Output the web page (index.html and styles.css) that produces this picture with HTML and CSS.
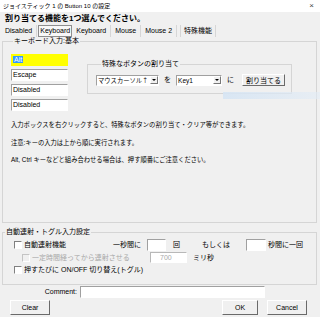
FILE: index.html
```html
<!DOCTYPE html>
<html lang="ja">
<head>
    <meta charset="UTF-8">
    <meta name="viewport" content="width=device-width, initial-scale=1.0">
    <title>ジョイスティック 1 の Button 10 の設定</title>
    <link rel="stylesheet" href="styles.css">
</head>
<body>
    <div class="titlebar">
        <span>ジョイスティック 1 の Button 10 の設定</span>
        <span class="close">×</span>
    </div>
    <div class="heading">割り当てる機能を1つ選んでください。</div>

    <div class="tabs">
        <span class="tab">Disabled</span>
        <span class="tab active">Keyboard</span>
        <span class="tab">Keyboard</span>
        <span class="tab">Mouse</span>
        <span class="tab">Mouse 2</span>
        <span class="tab boxed">特殊機能</span>
    </div>

    <fieldset class="group keyboard">
        <legend>キーボード入力:基本</legend>
        <div class="key-row">
            <div class="keys">
                <div class="keybox current"><span class="sel">Alt</span></div>
                <div class="keybox">Escape</div>
                <div class="keybox">Disabled</div>
                <div class="keybox">Disabled</div>
            </div>
            <fieldset class="group special">
                <legend>特殊なボタンの割り当て</legend>
                <div class="special-row">
                    <div class="select wide"><span class="value cjk">マウスカーソル↑</span><span class="arrow"></span></div>
                    <span class="word">を</span>
                    <div class="select"><span class="value">Key1</span><span class="arrow"></span></div>
                    <span class="word">に</span>
                    <button class="btn assign" type="button">割り当てる</button>
                </div>
            </fieldset>
        </div>
        <p class="note first">入力ボックスを右クリックすると、特殊なボタンの割り当て・クリア等ができます。</p>
        <p class="note second">注意:キーの入力は上から順に実行されます。</p>
        <p class="note third">Alt, Ctrl キーなどと組み合わせる場合は、押す順番にご注意ください。</p>
    </fieldset>

    <fieldset class="group auto">
        <legend>自動連射・トグル入力設定</legend>
        <div class="auto-row row1">
            <span class="check"></span>
            <span class="label">自動連射機能</span>
            <span class="per">一秒間に</span>
            <span class="field count"></span>
            <span class="unit">回</span>
            <span class="or">もしくは</span>
            <span class="field secs"></span>
            <span class="unit2">秒間に一回</span>
        </div>
        <div class="auto-row row2">
            <span class="check disabled"></span>
            <span class="label muted">一定時間経ってから連射させる</span>
            <span class="field delay">700</span>
            <span class="ms">ミリ秒</span>
        </div>
        <div class="auto-row row3">
            <span class="check"></span>
            <span class="label">押すたびに ON/OFF 切り替え(トグル)</span>
        </div>
    </fieldset>

    <div class="comment-row">
        <label for="comment">Comment:</label>
        <input type="text" id="comment" class="comment">
    </div>

    <div class="buttons">
        <button class="btn clear" type="button">Clear</button>
        <button class="btn ok" type="button">OK</button>
        <button class="btn cancel" type="button">Cancel</button>
    </div>

    <div class="glare"></div>
</body>
</html>
```

FILE: styles.css
```css
* {
    box-sizing: border-box;
}
body {
    margin: 0;
    width: 320px;
    height: 317px;
    overflow: hidden;
    position: relative;
    background-color: #f0f0f0;
    font-family: "Liberation Sans", "Noto Sans CJK JP", sans-serif;
    font-size: 7px;
    line-height: 8px;
    color: #000;
}
.titlebar {
    height: 12px;
    background-color: #fff;
    display: flex;
    justify-content: space-between;
    align-items: center;
    padding: 0 6px 0 3px;
    font-size: 6px;
}
.titlebar .close {
    font-size: 8px;
    color: #444;
}
.heading {
    height: 13px;
    padding: 1px 0 0 5px;
    font-size: 8px;
    font-weight: bold;
    line-height: 11px;
}
.tabs {
    height: 12px;
    display: flex;
    padding-left: 2px;
}
.tab {
    padding: 0 4px 0 3px;
    line-height: 11px;
    border-right: 1px solid #d6d6d6;
    margin-right: 1px;
}
.tab.active {
    padding: 0 1px;
    border: 1px solid #8e8e8e;
    background-color: #f8f8f8;
    line-height: 9px;
}
.tab.boxed {
    border-left: 1px solid #d6d6d6;
    padding: 0 3px;
    margin-left: 2px;
}

/* group boxes */
fieldset.group {
    margin: 0 3px 0 2px;
    padding: 0;
    border: 1px solid #d5d5d5;
    min-width: 0;
}
fieldset.group legend {
    margin-left: 2px;
    padding: 0 1px;
    line-height: 8px;
}
.keyboard {
    margin-top: 1px;
    height: 186px;
    padding: 9px 0 0 8px !important;
}
.key-row {
    display: flex;
    align-items: flex-start;
}
.keys {
    display: flex;
    flex-direction: column;
    gap: 3px;
    width: 57px;
}
.keybox {
    height: 12px;
    background-color: #fff;
    border: 1px solid;
    border-color: #a0a0a0 #fff #fff #a0a0a0;
    padding-left: 1px;
    line-height: 10px;
}
.keybox.current {
    background-color: #ffff00;
    border-color: #ffff00;
}
.keybox .sel {
    background-color: #3399ff;
    color: #fff;
    padding: 0 1px;
}
fieldset.special {
    margin: 6px 0 0 19px;
    width: 205px;
    padding: 6px 6px 7px 8px;
}
fieldset.special legend {
    margin-left: 5px;
}
.special-row {
    display: flex;
    align-items: center;
    height: 12px;
}
.select {
    height: 11px;
    width: 48px;
    background-color: #fff;
    border: 1px solid;
    border-color: #a0a0a0 #fff #fff #a0a0a0;
    display: flex;
    justify-content: space-between;
    align-items: center;
    padding-left: 1px;
    line-height: 9px;
    font-size: 6.5px;
    white-space: nowrap;
}
.select.wide {
    width: 66px;
    font-size: 6.3px;
}
.select .value.cjk {
    font-family: "Noto Sans CJK JP", sans-serif;
}
.select .arrow {
    flex: none;
    width: 8px;
    height: 8px;
    background-color: #f0f0f0;
    border: 1px solid;
    border-color: #fff #777 #777 #fff;
    position: relative;
}
.select .arrow::after {
    content: "";
    position: absolute;
    left: 1px;
    top: 2px;
    border-left: 2px solid transparent;
    border-right: 2px solid transparent;
    border-top: 2px solid #000;
}
.word {
    margin: 0 5px;
}
.btn {
    font-family: inherit;
    font-size: 7px;
    color: #000;
    background-color: #f0f0f0;
    border: 1px solid;
    border-color: #fff #6a6a6a #6a6a6a #fff;
    padding: 0;
    cursor: pointer;
}
.assign {
    width: 45px;
    height: 12px;
    margin-left: 3px;
    line-height: 9px;
}
.note {
    margin: 0;
    height: 8px;
    font-size: 6.3px;
}
.note.first {
    margin-top: 10px;
}
.note.second {
    margin-top: 10px;
}
.note.third {
    margin-top: 9px;
}

/* auto fire */
.auto {
    margin-top: 5px !important;
    height: 57px;
    padding-top: 3px !important;
}
.auto-row {
    display: flex;
    align-items: center;
}
.row1 {
    height: 12px;
}
.row2 {
    height: 11px;
    margin-top: 1px;
}
.row3 {
    height: 10px;
    margin-top: 2px;
}
.check {
    width: 8px;
    height: 8px;
    background-color: #fff;
    border: 1px solid;
    border-color: #808080 #fff #fff #808080;
    margin-left: 11px;
}
.check.disabled {
    margin-left: 19px;
    border-color: #c4c4c4 #fff #fff #c4c4c4;
    background-color: #f0f0f0;
}
.auto-row .label {
    margin-left: 2px;
}
.row1 .label {
    width: 89px;
}
.row2 .label {
    width: 118px;
}
.muted {
    color: #a8a8a8;
}
.field {
    height: 12px;
    background-color: #fff;
    border: 1px solid;
    border-color: #a0a0a0 #fff #fff #a0a0a0;
}
.per {
    width: 34px;
}
.count {
    width: 19px;
}
.unit {
    margin-left: 7px;
    width: 29px;
}
.or {
    width: 44px;
}
.secs {
    width: 20px;
}
.unit2 {
    margin-left: 2px;
}
.delay {
    width: 37px;
    height: 11px;
    padding-left: 9px;
    line-height: 9px;
    color: #a8a8a8;
    border-color: #b8b8b8 #fff #fff #b8b8b8;
}
.ms {
    margin-left: 6px;
}

.comment-row {
    display: flex;
    align-items: center;
    height: 12px;
    margin-top: 1px;
}
.comment-row label {
    width: 78px;
    text-align: right;
    padding-right: 1px;
}
.comment {
    width: 185px;
    height: 12px;
    margin: 0 0 0 2px;
    padding: 0;
    background-color: #fff;
    border: 1px solid;
    border-color: #a0a0a0 #fff #fff #a0a0a0;
}
.buttons {
    display: flex;
    margin-top: 2px;
    padding: 0 13px 0 10px;
}
.buttons .btn {
    height: 15px;
}
.clear {
    width: 40px;
    margin-right: auto;
}
.ok {
    width: 36px;
    margin-right: 9px;
}
.cancel {
    width: 40px;
}
.glare {
    position: absolute;
    left: 223px;
    top: 92px;
    width: 97px;
    height: 7px;
    background: linear-gradient(to right, rgba(214, 229, 244, 0.9), rgba(226, 236, 246, 0.6));
}
```
